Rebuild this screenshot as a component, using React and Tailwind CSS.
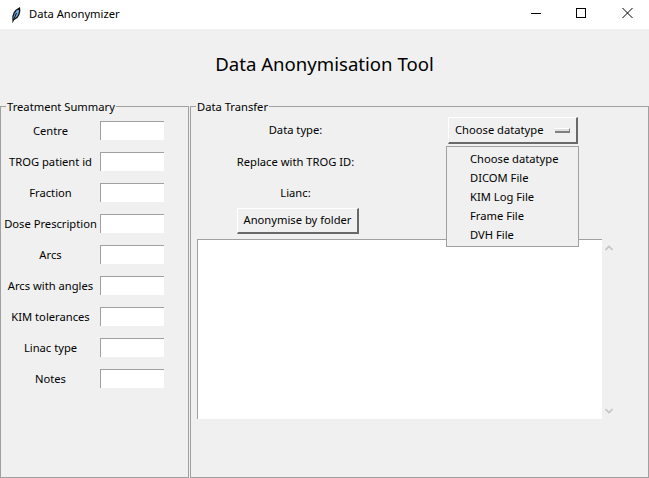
import React from 'react';

const FONT = { fontFamily: '"Noto Sans", sans-serif' };

const summaryRows = [
  'Centre',
  'TROG patient id',
  'Fraction',
  'Dose Prescription',
  'Arcs',
  'Arcs with angles',
  'KIM tolerances',
  'Linac type',
  'Notes',
];

const datatypes = ['Choose datatype', 'DICOM File', 'KIM Log File', 'Frame File', 'DVH File'];

const Feather = () => (
  <svg width="16" height="16" viewBox="0 0 16 16">
    <path d="M5 13 C4 8 7 3 11.5 1 C12.5 5 10.5 11 6 12.5 Z" fill="#6fa8dc" stroke="#111" strokeWidth="1.3" />
    <path d="M4.5 15.5 L8.5 6" stroke="#111" strokeWidth="1" />
  </svg>
);

const TitleBar = () => (
  <div className="flex h-[29px] items-center bg-white">
    <div className="ml-[8px] mr-[5px] flex w-[16px] justify-center">
      <Feather />
    </div>
    <span className="text-[11.2px] text-black">Data Anonymizer</span>
    <div className="ml-auto flex h-full items-center">
      <svg width="46" height="29" viewBox="0 0 46 29">
        <path d="M20 13.5 H30" stroke="#000" strokeWidth="1" />
      </svg>
      <svg width="46" height="29" viewBox="0 0 46 29">
        <rect x="19.5" y="8.5" width="9" height="9" fill="none" stroke="#000" strokeWidth="1" />
      </svg>
      <svg width="46" height="29" viewBox="0 0 46 29">
        <path d="M19.5 8 L29.5 18 M29.5 8 L19.5 18" stroke="#000" strokeWidth="1" />
      </svg>
    </div>
  </div>
);

const Legend = ({ children, className }) => (
  <span className={`absolute top-[-8px] bg-[#f0f0f0] text-[11.2px] leading-[15px] text-black ${className}`}>
    {children}
  </span>
);

const TreatmentSummary = () => (
  <div className="relative h-[372px] w-[189px] shrink-0 border border-[#a0a0a0] pt-[14px]">
    <Legend className="left-[5px] px-[1px]">Treatment Summary</Legend>
    <div className="flex flex-col gap-[12px]">
      {summaryRows.map((label) => (
        <div key={label} className="flex h-[19px] items-center">
          <span className="w-[99px] shrink-0 whitespace-nowrap pt-[1px] text-center text-[11.2px] text-black">{label}</span>
          <div className="h-[19px] w-[64px] border-l border-t border-[#a0a0a0] bg-white" />
        </div>
      ))}
    </div>
  </div>
);

const DataTransfer = () => (
  <div className="relative ml-[1px] h-[372px] flex-1 border border-[#a0a0a0] pt-[10px]">
    <Legend className="left-[5px] px-[1px]">Data Transfer</Legend>
    <div className="flex h-[27px] items-center">
      <span className="w-[209px] text-center text-[11.2px] text-black">Data type:</span>
      <button className="ml-[48px] flex h-[27px] w-[130px] items-center border-b-2 border-r-2 border-l border-t border-b-[#696969] border-r-[#696969] border-l-white border-t-white pl-[6px] text-[11.2px] text-black">
        Choose datatype
        <span className="ml-auto mr-[6px] h-[5px] w-[15px] border-b-2 border-r border-t border-b-[#808080] border-r-[#808080] border-t-white bg-[#e0e0e0]" />
      </button>
    </div>
    <div className="mt-[10px] flex h-[16px] items-center">
      <span className="w-[209px] text-center text-[11.2px] text-black">Replace with TROG ID:</span>
    </div>
    <div className="mt-[15px] flex h-[16px] items-center">
      <span className="w-[209px] text-center text-[11.2px] text-black">Lianc:</span>
    </div>
    <button className="ml-[46px] mt-[7px] block h-[26px] w-[122px] border-b-2 border-r-2 border-l border-t border-b-[#696969] border-r-[#696969] border-l-white border-t-white text-[11.2px] text-black">
      Anonymise by folder
    </button>
    <div className="mt-[5px] flex">
      <div className="ml-[6px] h-[180px] w-[405px] border-l border-t border-[#a0a0a0] bg-white" />
      <div className="ml-[-1px] flex w-[16px] flex-col items-center justify-between pb-[5px] pt-[6px]">
        <svg width="8" height="6" viewBox="0 0 8 6">
          <path d="M0.5 5 L4 1.5 L7.5 5" fill="none" stroke="#c4c4c4" strokeWidth="1.6" />
        </svg>
        <svg width="8" height="6" viewBox="0 0 8 6">
          <path d="M0.5 1 L4 4.5 L7.5 1" fill="none" stroke="#c4c4c4" strokeWidth="1.6" />
        </svg>
      </div>
    </div>
    <div className="absolute left-[255px] top-[39px] flex h-[101px] w-[133px] flex-col border border-[#a0a0a0] bg-[#f0f0f0] pt-[2px]">
      {datatypes.map((item) => (
        <div key={item} className="h-[19px] pl-[23px] text-[11.2px] leading-[19px] text-black">
          {item}
        </div>
      ))}
    </div>
  </div>
);

export default function App() {
  return (
    <div className="h-[478px] w-[649px] overflow-hidden bg-[#f0f0f0]" style={FONT}>
      <TitleBar />
      <h1 className="flex h-[77px] items-center justify-center pb-[8px] text-[18.6px] font-normal text-black">
        Data Anonymisation Tool
      </h1>
      <div className="flex">
        <TreatmentSummary />
        <DataTransfer />
      </div>
    </div>
  );
}
